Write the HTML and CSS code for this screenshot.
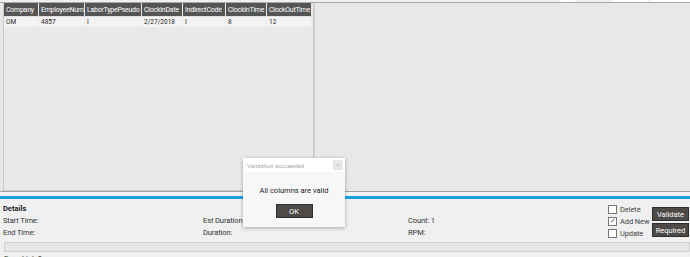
FILE: index.html
```html
<!DOCTYPE html>
<html lang="en">
<head>
    <meta charset="UTF-8">
    <title>Labor Import</title>
    <link rel="stylesheet" href="styles.css">
</head>
<body>
    <div class="app">
        <div class="tabs">
            <span class="tab t1"></span>
            <span class="tab t2"></span>
            <span class="tab t3"></span>
        </div>
        <div class="main">
            <div class="grid">
                <table class="tabla">
                    <colgroup>
                        <col class="c1"><col class="c2"><col class="c3"><col class="c4"><col class="c5"><col class="c6"><col class="c7">
                    </colgroup>
                    <tr>
                        <th>Company</th>
                        <th>EmployeeNum</th>
                        <th>LaborTypePseudo</th>
                        <th>ClockInDate</th>
                        <th>IndirectCode</th>
                        <th>ClockInTime</th>
                        <th>ClockOutTime</th>
                    </tr>
                    <tr>
                        <td>OM</td>
                        <td>4857</td>
                        <td>I</td>
                        <td>2/27/2018</td>
                        <td>I</td>
                        <td>8</td>
                        <td>12</td>
                    </tr>
                </table>
            </div>
            <div class="panel"></div>
        </div>
        <div class="sep"></div>
        <div class="details">
            <div class="info">
                <div class="titulo">Details</div>
                <div class="campos">
                    <span>Start Time:</span>
                    <span>Est Duration:</span>
                    <span>Count: 1</span>
                    <span>End Time:</span>
                    <span>Duration:</span>
                    <span>RPM:</span>
                </div>
            </div>
            <div class="checks">
                <label><span class="box"></span>Delete</label>
                <label><span class="box on">&#10003;</span>Add New</label>
                <label><span class="box"></span>Update</label>
            </div>
            <div class="acciones">
                <button class="boton">Validate</button>
                <button class="boton">Required</button>
            </div>
        </div>
        <div class="progreso"></div>
        <div class="pie">Error List: 0</div>

        <div class="dialogo">
            <div class="dlg-titulo">
                <span>Validation succeeded</span>
                <span class="cerrar">&times;</span>
            </div>
            <div class="dlg-texto">All columns are valid</div>
            <button class="boton ok">OK</button>
        </div>
    </div>
</body>
</html>
```

FILE: styles.css
```css
body {
    margin: 0;
    background-color: #f0f0f0;
    font-family: Roboto, "Noto Sans", sans-serif;
    font-size: 7.5px;
    color: #333;
}
.app {
    position: relative;
    width: 690px;
    height: 257px;
    overflow: hidden;
}
.tabs {
    height: 2px;
    display: flex;
    border-bottom: 1px solid #a8a8a8;
}
.tab {
    height: 2px;
    background-color: #fff;
}
.t1 { margin-left: 560px; width: 15px; }
.t2 { margin-left: 38px; width: 36px; }
.t3 { margin-left: 3px; width: 39px; }
.main {
    display: flex;
    height: 188px;
    background-color: #e8e8e8;
}
.grid {
    width: 309px;
    margin-left: 3px;
    border: 1px solid #c8c8c8;
    border-top: none;
    background-color: #e9e9e9;
    overflow: hidden;
}
.tabla {
    table-layout: fixed;
    width: 309px;
    border-collapse: separate;
    border-spacing: 1px 0;
    margin-left: -1px;
}
.tabla th {
    background-color: #555;
    color: #fff;
    font-weight: normal;
    font-size: 7px;
    letter-spacing: -0.25px;
    height: 13px;
    padding: 0 1px 0 2px;
    text-align: left;
    white-space: nowrap;
    overflow: hidden;
}
.tabla td {
    background-color: #f3f3f3;
    height: 10px;
    padding: 0 2px;
    font-size: 6.5px;
    color: #222;
    border-top: 1px solid #e0e0e0;
}
.c1 { width: 34px; }
.c2 { width: 45px; }
.c3 { width: 56px; }
.c4 { width: 40px; }
.c5 { width: 42px; }
.c6 { width: 40px; }
.c7 { width: 44px; }
.panel {
    flex: 1;
    border-left: 1px solid #d4d4d4;
}
.sep {
    height: 4px;
    border-top: 1px solid #a0a0a0;
    border-bottom: 3px solid #1ba1e2;
    background-color: #f4f4f4;
}
.details {
    display: flex;
    height: 38px;
    padding-top: 5px;
}
.info {
    flex: 1;
    padding-left: 3px;
}
.titulo {
    font-weight: bold;
    color: #222;
    height: 11px;
}
.campos {
    display: grid;
    grid-template-columns: 200px 205px auto;
    row-gap: 1px;
    line-height: 11px;
    letter-spacing: -0.1px;
}
.checks {
    display: flex;
    flex-direction: column;
    gap: 1px;
    width: 44px;
    white-space: nowrap;
    letter-spacing: -0.1px;
}
.checks label {
    display: flex;
    align-items: center;
    gap: 3px;
    height: 11px;
    color: #444;
}
.box {
    width: 7px;
    height: 7px;
    flex: none;
    border: 1px solid #777;
    background-color: #fff;
    font-size: 7px;
    line-height: 7px;
    text-align: center;
    color: #555;
}
.acciones {
    display: flex;
    flex-direction: column;
    gap: 2px;
    padding-top: 3px;
    margin-right: 1px;
}
.boton {
    width: 37px;
    height: 14px;
    padding: 0;
    background-color: #4d4a48;
    color: #fff;
    border: 1px solid #2e2e2e;
    font-family: inherit;
    font-size: 7.5px;
}
.progreso {
    height: 8px;
    margin-left: 4px;
    border: 1px solid #d0d0d0;
    background-color: #e6e6e6;
}
.pie {
    padding: 2px 4px;
    color: #333;
}
.dialogo {
    position: absolute;
    left: 243px;
    top: 158px;
    width: 102px;
    height: 69px;
    background-color: #f7f7f7;
    box-shadow: 0 1px 4px rgba(0, 0, 0, 0.3);
    text-align: center;
}
.dlg-titulo {
    display: flex;
    justify-content: space-between;
    align-items: center;
    height: 14px;
    padding: 0 2px 0 4px;
    background-color: #fff;
    color: #aaa;
    font-size: 6px;
}
.cerrar {
    width: 10px;
    height: 10px;
    background-color: #e8e8e8;
    color: #bbb;
    line-height: 10px;
}
.dlg-texto {
    margin-top: 14px;
    color: #222;
}
.ok {
    margin-top: 9px;
}
```
